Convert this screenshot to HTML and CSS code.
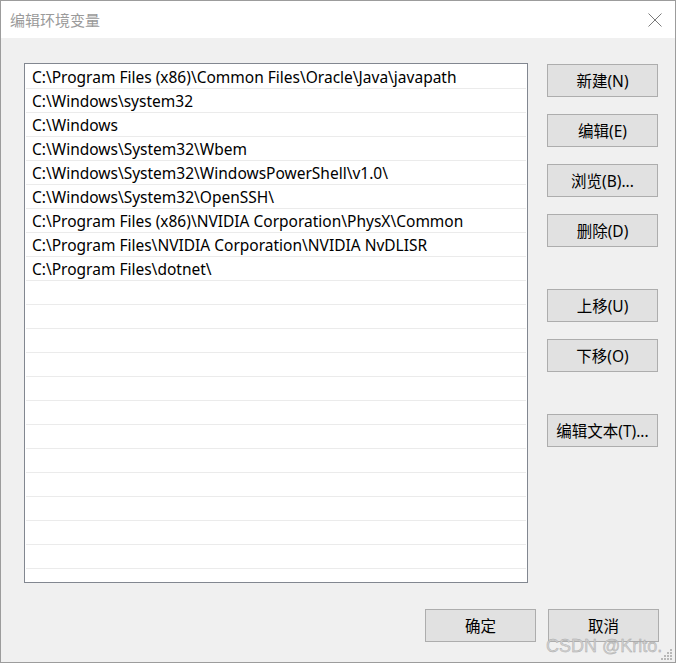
FILE: index.html
```html
<!DOCTYPE html>
<html lang="zh-CN">
<head>
<meta charset="utf-8">
<title>编辑环境变量</title>
<link rel="stylesheet" href="styles.css">
</head>
<body>
<div class="window">
  <div class="titlebar">
    <span class="title">编辑环境变量</span>
    <svg class="close" width="14" height="14" viewBox="0 0 14 14"><path d="M0.5 0.5 L13.5 13.5 M13.5 0.5 L0.5 13.5" stroke="#7a7a7a" stroke-width="1" fill="none"/></svg>
  </div>
  <div class="content">
    <div class="main">
      <div class="list">
        <div class="row">C:\Program Files (x86)\Common Files\Oracle\Java\javapath</div>
        <div class="row">C:\Windows\system32</div>
        <div class="row">C:\Windows</div>
        <div class="row">C:\Windows\System32\Wbem</div>
        <div class="row">C:\Windows\System32\WindowsPowerShell\v1.0\</div>
        <div class="row">C:\Windows\System32\OpenSSH\</div>
        <div class="row">C:\Program Files (x86)\NVIDIA Corporation\PhysX\Common</div>
        <div class="row">C:\Program Files\NVIDIA Corporation\NVIDIA NvDLISR</div>
        <div class="row">C:\Program Files\dotnet\</div>
        <div class="row"></div>
        <div class="row"></div>
        <div class="row"></div>
        <div class="row"></div>
        <div class="row"></div>
        <div class="row"></div>
        <div class="row"></div>
        <div class="row"></div>
        <div class="row"></div>
        <div class="row"></div>
        <div class="row"></div>
        <div class="row"></div>
      </div>
      <div class="side">
        <div class="group">
          <button class="btn">新建(N)</button>
          <button class="btn">编辑(E)</button>
          <button class="btn">浏览(B)...</button>
          <button class="btn">删除(D)</button>
        </div>
        <div class="group">
          <button class="btn">上移(U)</button>
          <button class="btn">下移(O)</button>
        </div>
        <div class="group">
          <button class="btn">编辑文本(T)...</button>
        </div>
      </div>
    </div>
    <div class="footer">
      <button class="btn">确定</button>
      <button class="btn">取消</button>
    </div>
  </div>
  <div class="watermark">CSDN @Krito.</div>
  <svg class="grip" width="12" height="12" viewBox="0 0 12 12">
    <g fill="#b8b8b8">
      <rect x="9" y="0" width="2" height="2"/>
      <rect x="6" y="3" width="2" height="2"/><rect x="9" y="3" width="2" height="2"/>
      <rect x="3" y="6" width="2" height="2"/><rect x="6" y="6" width="2" height="2"/><rect x="9" y="6" width="2" height="2"/>
      <rect x="0" y="9" width="2" height="2"/><rect x="3" y="9" width="2" height="2"/><rect x="6" y="9" width="2" height="2"/><rect x="9" y="9" width="2" height="2"/>
    </g>
  </svg>
</div>
</body>
</html>
```
FILE: styles.css
```css
* { box-sizing: border-box; }
html, body {
  margin: 0;
  padding: 0;
  background: #ffffff;
}
body {
  font-family: "Noto Sans", "Noto Sans CJK SC", sans-serif;
  font-size: 15px;
  color: #000;
}
.window {
  position: relative;
  width: 676px;
  height: 663px;
  border: 1px solid #9c9c9c;
  background: #f0f0f0;
  overflow: hidden;
}
.titlebar {
  height: 37px;
  background: #ffffff;
  display: flex;
  align-items: center;
  justify-content: space-between;
  padding: 0 13px 0 9px;
}
.title {
  font-family: "Noto Sans CJK SC", sans-serif;
  font-size: 15px;
  color: #9a9a9a;
}
.close {
  display: block;
  margin-top: 1px;
}
.content {
  padding: 25px 16px 0 23px;
}
.main {
  display: flex;
  gap: 19px;
}
.list {
  width: 504px;
  height: 520px;
  border: 1px solid #828790;
  background: #ffffff;
  padding: 1px 1px 0 1px;
  overflow: hidden;
}
.row {
  height: 24px;
  line-height: 23px;
  padding-top: 1px;
  border-bottom: 1px solid #ebebeb;
  padding-left: 6px;
  white-space: nowrap;
  font-size: 15.5px;
}
.side {
  display: flex;
  flex-direction: column;
  padding-top: 1px;
  gap: 42px;
}
.group {
  display: flex;
  flex-direction: column;
  gap: 17px;
}
.btn {
  width: 111px;
  height: 33px;
  background: #e1e1e1;
  border: 1px solid #adadad;
  font-family: "Noto Sans", "Noto Sans CJK SC", sans-serif;
  font-size: 15.5px;
  line-height: 20px;
  color: #000;
  padding: 0;
  margin: 0;
}
.footer {
  display: flex;
  justify-content: flex-end;
  gap: 12px;
  margin-top: 26px;
}
.watermark {
  position: absolute;
  left: 545px;
  top: 634px;
  font-family: "Liberation Sans", sans-serif;
  font-size: 18px;
  line-height: 22px;
  color: #d2d2d2;
  -webkit-text-stroke: 0.4px #a8a8a8;
  white-space: nowrap;
}
.grip {
  position: absolute;
  right: 2px;
  bottom: 1px;
}
```
